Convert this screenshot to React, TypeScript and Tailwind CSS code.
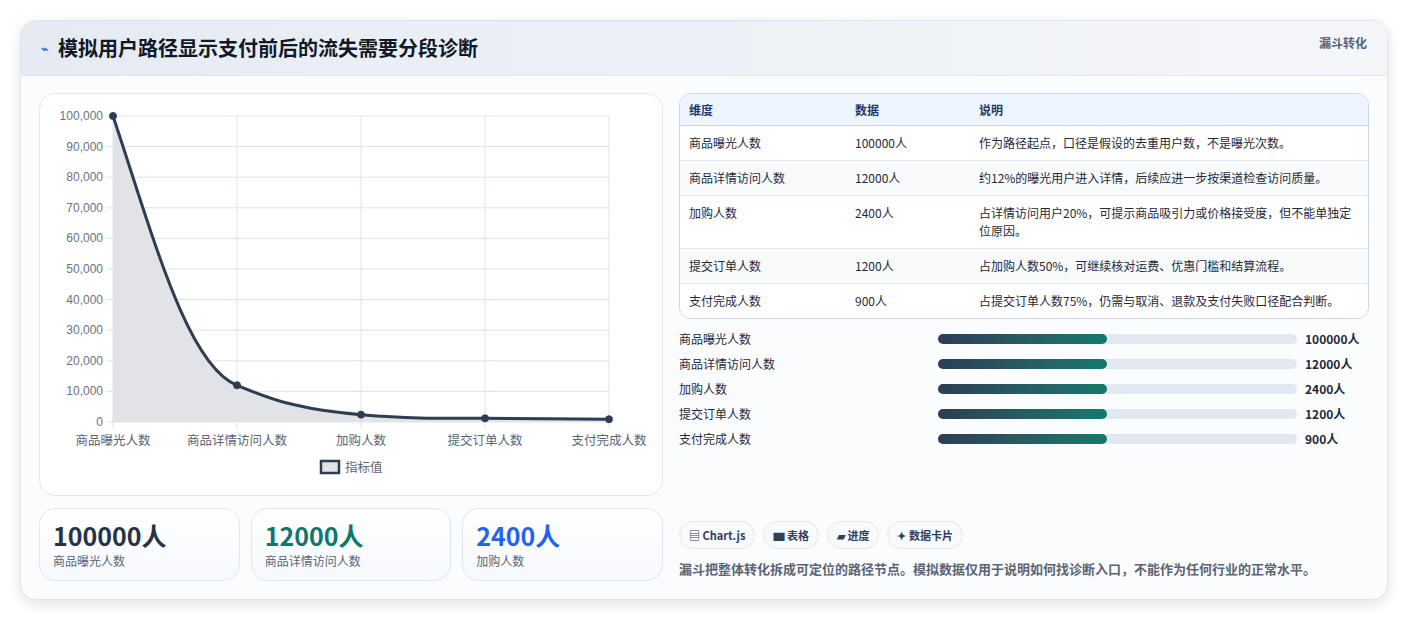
const font = { fontFamily: '"Noto Sans CJK SC", "Liberation Sans", sans-serif' }

const rows = [
  { k: "商品曝光人数", v: "100000人", d: "作为路径起点，口径是假设的去重用户数，不是曝光次数。" },
  { k: "商品详情访问人数", v: "12000人", d: "约12%的曝光用户进入详情，后续应进一步按渠道检查访问质量。" },
  { k: "加购人数", v: "2400人", d: "占详情访问用户20%，可提示商品吸引力或价格接受度，但不能单独定位原因。" },
  { k: "提交订单人数", v: "1200人", d: "占加购人数50%，可继续核对运费、优惠门槛和结算流程。" },
  { k: "支付完成人数", v: "900人", d: "占提交订单人数75%，仍需与取消、退款及支付失败口径配合判断。" },
]

const vals = [100000, 12000, 2400, 1200, 900]

function Chart() {
  const x0 = 73, x1 = 569, y0 = 22, y1 = 328
  const xs = vals.map((_, i) => x0 + ((x1 - x0) / 4) * i)
  const ys = vals.map((v) => y1 - (v / 100000) * (y1 - y0))
  const line = `M${xs[0]},${ys[0]} C${xs[0] + 40},${ys[0] + 120} ${xs[1] - 50},${ys[1] - 20} ${xs[1]},${ys[1]} C${xs[1] + 30},${ys[1] + 12} ${xs[2] - 70},${ys[2] - 6} ${xs[2]},${ys[2]} C${xs[2] + 50},${ys[2] + 4} ${xs[3] - 50},${ys[3]} ${xs[3]},${ys[3]} C${xs[3] + 50},${ys[3]} ${xs[4] - 50},${ys[4]} ${xs[4]},${ys[4]}`
  const ticks = [100000, 90000, 80000, 70000, 60000, 50000, 40000, 30000, 20000, 10000, 0]
  const labels = ["商品曝光人数", "商品详情访问人数", "加购人数", "提交订单人数", "支付完成人数"]
  return (
    <svg width="622" height="400" className="block">
      {ticks.map((t) => {
        const y = y1 - (t / 100000) * (y1 - y0)
        return (
          <g key={t}>
            <line x1={x0 - 6} x2={x1} y1={y} y2={y} stroke="#dde3ec" />
            <text x={x0 - 10} y={y + 4} textAnchor="end" fontSize="12" fill="#6b7280" fontFamily="Liberation Sans, sans-serif">
              {t.toLocaleString("en-US")}
            </text>
          </g>
        )
      })}
      {xs.map((x, i) => (
        <g key={i}>
          <line x1={x} x2={x} y1={y0} y2={y1 + 6} stroke="#dde3ec" />
          <text x={x} y={y1 + 23} textAnchor="middle" fontSize="12.5" fill="#5b6475" style={font}>
            {labels[i]}
          </text>
        </g>
      ))}
      <path d={`${line} L${x1},${y1} L${x0},${y1} Z`} fill="#e2e3e6" />
      <path d={line} fill="none" stroke="#2f3d52" strokeWidth="3" />
      {xs.map((x, i) => (
        <circle key={i} cx={x} cy={ys[i]} r="3.5" fill="#2f3d52" stroke="#2f3d52" strokeWidth="1" />
      ))}
      <rect x="281" y="367" width="18" height="12" fill="#e2e3e6" stroke="#2f3d52" strokeWidth="2.5" />
      <text x="305" y="378" fontSize="12.5" fill="#5b6475" style={font}>指标值</text>
    </svg>
  )
}

export default function App() {
  return (
    <div className="min-h-[620px] bg-white px-[20px] pt-[20px]" style={font}>
      <div className="h-[580px] overflow-hidden rounded-2xl border border-[#dfe5ee] bg-[#fbfcfe] shadow-[0_4px_14px_rgba(15,23,42,0.12)]">
        <div className="flex h-[55px] items-center justify-between border-b border-[#e2e8f0] bg-gradient-to-r from-[#e6ebf3] to-[#f4f6fa] pl-[20px] pr-[20px]">
          <div className="flex items-center gap-[10px]">
            <span className="text-[12px] font-bold text-[#3b6fd8]">⌁</span>
            <h1 className="text-[20px] font-bold text-[#111827]">模拟用户路径显示支付前后的流失需要分段诊断</h1>
          </div>
          <span className="-mt-[10px] text-[12px] font-bold text-[#5b6475]">漏斗转化</span>
        </div>
        <div className="flex gap-4 px-[18px] pt-[17px]">
          <div className="w-[624px] shrink-0">
            <div className="h-[403px] rounded-2xl border border-[#e2e8f0] bg-white">
              <Chart />
            </div>
            <div className="mt-3 grid grid-cols-3 gap-[11px]">
              {[
                { v: "100000人", l: "商品曝光人数", c: "text-[#263347]" },
                { v: "12000人", l: "商品详情访问人数", c: "text-[#0f766e]" },
                { v: "2400人", l: "加购人数", c: "text-[#2563eb]" },
              ].map((s) => (
                <div key={s.l} className="h-[73px] rounded-2xl border border-[#dde6f2] bg-gradient-to-b from-white to-[#f6f9fd] px-[13px] pt-[9px]">
                  <div className={`text-[25px] font-bold leading-[34px] ${s.c}`}>{s.v}</div>
                  <div className="text-[12px] text-[#5b6475]">{s.l}</div>
                </div>
              ))}
            </div>
          </div>
          <div className="flex-1">
            <div className="overflow-hidden rounded-xl border border-[#c9d6e8] bg-white text-[12px]">
              <div className="grid h-[32px] grid-cols-[166px_124px_1fr] items-center border-b border-[#c9d6e8] bg-[#eef5fe] px-[9px] font-bold text-[#1e3a6b]">
                <span>维度</span><span>数据</span><span>说明</span>
              </div>
              {rows.map((r, i) => (
                <div key={r.k} className={`grid grid-cols-[166px_124px_1fr] items-start border-b border-[#e5ebf3] px-[9px] py-[8px] text-[#1f2937] last:border-b-0 ${i % 2 === 1 ? "bg-[#f8fafc]" : "bg-white"}`}>
                  <span className="leading-[18px]">{r.k}</span>
                  <span className="leading-[18px]">{r.v}</span>
                  <span className="leading-[18px]">{r.d}</span>
                </div>
              ))}
            </div>
            <div className="mt-[11px] flex flex-col gap-[7px] text-[12px] text-[#1f2937]">
              {rows.map((r) => (
                <div key={r.k} className="flex h-[18px] items-center">
                  <span className="w-[259px]">{r.k}</span>
                  <div className="h-[10px] w-[359px] rounded-full bg-[#e2e8f0]">
                    <div className="h-[10px] w-[169px] rounded-full bg-gradient-to-r from-[#2c3e55] to-[#0f7a6e]" />
                  </div>
                  <span className="ml-[8px] font-bold">{r.v}</span>
                </div>
              ))}
            </div>
            <div className="mt-[73px] flex gap-2 text-[11px] font-bold text-[#334155]">
              {["▤ Chart.js", "▆ 表格", "▰ 进度", "✦ 数据卡片"].map((c) => (
                <span key={c} className="flex h-[28px] items-center rounded-full border border-[#e2e8f0] bg-[#f8fafc] px-[9px]">{c}</span>
              ))}
            </div>
            <p className="mt-[10px] text-[13px] font-bold text-[#5b6475]">漏斗把整体转化拆成可定位的路径节点。模拟数据仅用于说明如何找诊断入口，不能作为任何行业的正常水平。</p>
          </div>
        </div>
      </div>
    </div>
  )
}
